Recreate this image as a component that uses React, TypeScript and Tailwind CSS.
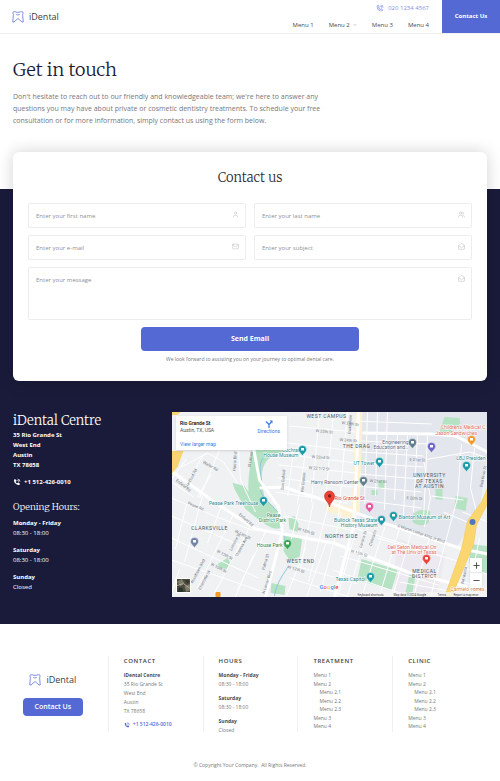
import { ReactNode } from 'react';
import clsx from 'clsx';
import {
  ChevronDown, Mail, MailOpen, Minus, Plus, User, Users,
} from 'lucide-react';
import { BiPhoneCall, BiSolidPhoneCall } from 'react-icons/bi';

const treatments = [
  { label: 'Menu 1' },
  { label: 'Menu 2' },
  { label: 'Menu 2.1', nested: true },
  { label: 'Menu 2.2', nested: true },
  { label: 'Menu 2.3', nested: true },
  { label: 'Menu 3' },
  { label: 'Menu 4' },
];

const hours = [
  { day: 'Monday - Friday', time: '08:30 - 18:00' },
  { day: 'Saturday', time: '08:30 - 18:00' },
  { day: 'Sunday', time: 'Closed' },
];

function Logo() {
  return (
    <a href="#home" className="flex items-center gap-[5px] text-[9px] leading-3 text-[#3c3d45]">
      <svg viewBox="0 0 24 24" className="h-3 w-3 text-[#5469d4]" fill="none" stroke="currentColor" strokeWidth="1.5" strokeLinejoin="round">
        <path d="M2 2.500C4 1 6 1 8 2c2.500 1 5.500 1 8 0 2-1 4-1 6 .5v3c-1 1-1 2.500-.6 4L22.500 22H20l-8-7-8 7H1.500l1.100-12.500c.4-1.500.4-3-.6-4z" />
        <path d="M8.500 7c2 1 5 1 7 0" />
      </svg>
      iDental
    </a>
  );
}

type FieldProps = { name: string, label: string, icon: ReactNode };

function Field({ name, label, icon }: FieldProps) {
  return (
    <div className="relative">
      <input
        name={name}
        aria-label={label}
        placeholder={label}
        className="block h-[25px] w-full rounded-xs border border-[#ededed] pr-5 pl-[7px] text-[6px] leading-3 text-gray-700 placeholder:text-[#8f8f8f]"
      />
      <span className="absolute top-2 right-[7px] text-[#c4c4c4]">{icon}</span>
    </div>
  );
}

const mapAreas = [
  'M80 34h22l-4 12c-6 5-8 13-8 22l3 18c5 6 12 10 15 17l1 13c-6 3-14-3-20-7l-15-12-11-20-2-6 12 3 4 6c-1-15 3-30 3-46z',
  'M91 38l16-5 4 7-13 3-5 8z',
  'M117 106l6-2 4 8-1 8-8-3z',
  'M113 122l18 3-3 20-10 3-6-9z',
  'M46 152l10-6 3 5-3 6-7-1z',
  'M100 171l14 3-1 9-14-2z',
  'M273 5l15 1 1 7-8 5-3 5-10-2z',
  'M264 77h7v11l-7-1z',
  'M241 104c3-7 15-7 18-4l-2 11c-6 4-14 2-16-2z',
  'M190 147l36 11-6 20-34-10z',
  'M207 68h6v9h-6zM200 78h6v5h-6z',
  'M284 84l12 2-2 13-11-3z',
  'M298 132l18 2v28l-10-3-8-9z',
  'M238 162l6 2-4 21h-7z',
];

const minorRoads = [
  // campus blocks
  'M196 0l-3 92M206 0l-2 84M216 0l-3 98M226 22l-3 66M236 22l-4 82M246 22l-4 78M256 24l-4 84',
  'M184 9l76 3M190 29l66 3M190 40l62 4M190 51l62 4M188 62l62 5M186 74l64 6M182 87l68 9M252 48l46-8 18 6',
  'M252 48l7 38-6 29M290 32l-4 54-12 44M303 36l-4 40 6 24M272 100l28 12M260 84l32 4',
  // west campus
  'M148 0l-8 90M162 0l-8 88M176 0l-9 104M118 14l66 6M109 30l74 9M112 42l72 9M107 53l77 8M107 66l74 9M104 80l72 11M122 38l-6 46M134 40l-8 52',
  'M112 104l72 15M128 92l-8 35M142 90l-13 66M157 92l-20 78M170 100l-21 80M134 136l-19 48M155 130l-20 55',
  'M124 154l62 18M118 166l60 19M184 120l-18 65M200 104l-24 80M215 110l-25 75M228 116l-20 68M240 120l-19 65M258 126l-16 59M274 130l-15 55',
  'M170 112l100 32M169 144l98 29M161 158l70 24M206 126l80 23M228 170l55 10',
  // clarksville
  'M0 86l43 18 40 15M0 104l70 30M0 126l34 16 53 24M0 148l92 32M15 93l-11 44M31 84l-18 66M62 102l-36 74M78 115l-35 66M94 120l-28 58M50 94l-14 37M8 157l-8 24M82 143l-18 42',
  'M0 70l22 15M15 47l-15 20M31 44l-17 31M10 55l26-14 16 9 14 21M48 38l-20 48M67 37l2 31 15 32M40 62l-14 23',
  'M291 100l25 10M284 154l32 8M293 137l-11 48M308 126l-12 59M286 168l30 9',
];

const mainRoads = [
  'M0 59l43 31 41 27 78 14 74 29 60 15',
  'M82 36l6 32 19 27 4 24-17 66',
  'M88 76l24-1 34 11 60 23 85 28 25 5',
  'M191 21l68 1 25 2 32 16',
  'M187 0l-2 56-3 58-19 71',
];

const streets = [
  { name: 'Enfield Rd', x: 4, y: 69, angle: 38 },
  { name: 'Enfield Rd', x: 67, y: 103, angle: 41 },
  { name: 'Waller Rd', x: 31, y: 51, angle: 30 },
  { name: 'Hartford Rd', x: 16, y: 76, angle: -62 },
  { name: 'Pease Rd', x: 16, y: 92, angle: 24 },
  { name: 'Harris Blvd', x: 64, y: 59, angle: -86 },
  { name: 'N Lamar', x: 79, y: 55, angle: -82 },
  { name: 'W 24th St', x: 170, y: 12, angle: 7 },
  { name: 'W 25th St', x: 144, y: 20, angle: 5 },
  { name: 'W 22nd St', x: 140, y: 46, angle: 4 },
  { name: 'W 22 1/2 St', x: 137, y: 57, angle: 4 },
  { name: 'W 24th St', x: 168, y: 29, angle: 4 },
  { name: 'W 18th St', x: 126, y: 118, angle: 17 },
  { name: 'W 15th St', x: 179, y: 140, angle: 17 },
  { name: 'W 12th St', x: 116, y: 156, angle: 17 },
  { name: 'W 12th St', x: 45, y: 140, angle: 28 },
  { name: 'W 13th St', x: 63, y: 120, angle: 26 },
  { name: 'W 10th St', x: 39, y: 153, angle: 28 },
  { name: 'Lorraine St', x: 60, y: 139, angle: -62 },
  { name: 'Theresa Ave', x: 66, y: 145, angle: -62 },
  { name: 'Woodlawn Blvd', x: 21, y: 172, angle: -62 },
  { name: 'Charlotte St', x: 29, y: 178, angle: -62 },
  { name: 'N Lamar Blvd', x: 93, y: 182, angle: -72 },
  { name: 'Palma St', x: 93, y: 158, angle: -74 },
  { name: 'Rio Grande', x: 132, y: 80, angle: -84 },
  { name: 'San Gabriel', x: 112, y: 78, angle: -85 },
  { name: 'Guadalupe', x: 179, y: 22, angle: -86 },
  { name: 'Lavaca St', x: 190, y: 136, angle: -72 },
  { name: 'Colorado', x: 200, y: 134, angle: -72 },
  { name: 'E 21st St', x: 238, y: 49, angle: 2 },
  { name: 'W 21st St', x: 198, y: 70, angle: 4 },
  { name: 'E 20th St', x: 235, y: 87, angle: 4 },
  { name: 'E Martin Luther King Jr Blvd', x: 226, y: 115, angle: 19 },
  { name: 'Red River St', x: 311, y: 75, angle: -79 },
  { name: 'Navasota', x: 292, y: 172, angle: -78 },
];

const districts = [
  { name: 'WEST CAMPUS', x: 155, y: 6 },
  { name: 'THE DRAG', x: 185, y: 36 },
  { name: 'UNIVERSITY', x: 258, y: 65 },
  { name: 'OF TEXAS', x: 258, y: 71 },
  { name: 'AT AUSTIN', x: 258, y: 76 },
  { name: 'CLARKSVILLE', x: 38, y: 118 },
  { name: 'NORTH SIDE', x: 170, y: 126 },
  { name: 'WEST END', x: 129, y: 151 },
  { name: 'MEDICAL', x: 253, y: 161 },
  { name: 'DISTRICT', x: 253, y: 166 },
];

const places = [
  { name: 'Cochran', x: 129, y: 40, color: '#2b8a91', anchor: 'end' },
  { name: 'House Museum', x: 127, y: 45, color: '#2b8a91', anchor: 'end' },
  { name: 'Pease Park Treehouse', x: 87, y: 93, color: '#2b8a91', anchor: 'end' },
  { name: 'Pease', x: 102, y: 105, color: '#2f8550', anchor: 'middle' },
  { name: 'District Park', x: 101, y: 110, color: '#2f8550', anchor: 'middle' },
  { name: 'House Park', x: 111, y: 135, color: '#2f8550', anchor: 'end' },
  { name: 'Harry Ransom Center', x: 187, y: 72, color: '#5f6b7a', anchor: 'end' },
  { name: 'Engineering', x: 237, y: 32, color: '#5f6b7a', anchor: 'end' },
  { name: 'Education and…', x: 237, y: 37, color: '#5f6b7a', anchor: 'end' },
  { name: 'UT Tower', x: 203, y: 53, color: '#2b8a91', anchor: 'end' },
  { name: "Children's Medical C", x: 314, y: 17, color: '#e06a5b', anchor: 'end' },
  { name: 'Jason Sandwiches', x: 264, y: 23, color: '#e06a5b', anchor: 'start' },
  { name: 'LBJ Presiden', x: 314, y: 48, color: '#2b8a91', anchor: 'end' },
  { name: 'Rio Grande St', x: 163, y: 88, color: '#dc4a42', anchor: 'start' },
  { name: 'Bullock Texas State', x: 206, y: 110, color: '#2b8a91', anchor: 'end' },
  { name: 'History Museum', x: 206, y: 115, color: '#2b8a91', anchor: 'end' },
  { name: 'Blanton Museum of Art', x: 227, y: 107, color: '#2b8a91', anchor: 'start' },
  { name: 'Dell Seton Medical Ctr', x: 265, y: 137, color: '#e06a5b', anchor: 'end' },
  { name: 'at The Univ of Texas', x: 265, y: 142, color: '#e06a5b', anchor: 'end' },
  { name: 'Texas Capitol', x: 194, y: 169, color: '#2b8a91', anchor: 'end' },
  { name: 'Carmelo Torres', x: 313, y: 179, color: '#e88a3c', anchor: 'end' },
] as const;

const pins = [
  { x: 131, y: 44, color: '#1c9aa8' },
  { x: 92, y: 95, color: '#1c9aa8' },
  { x: 208, y: 56, color: '#1c9aa8' },
  { x: 295, y: 60, color: '#1c9aa8' },
  { x: 210, y: 114, color: '#1c9aa8' },
  { x: 222, y: 110, color: '#1c9aa8' },
  { x: 199, y: 171, color: '#1c9aa8' },
  { x: 116, y: 138, color: '#34a853' },
  { x: 241, y: 37, color: '#607d8b' },
  { x: 192, y: 75, color: '#607d8b' },
  { x: 23, y: 136, color: '#7184a8' },
  { x: 260, y: 41, color: '#6c63c8' },
  { x: 300, y: 34, color: '#f29a28' },
  { x: 198, y: 101, color: '#e955a0' },
  { x: 255, y: 153, color: '#ea4335' },
];

function MapDrawing() {
  return (
    <svg viewBox="0 0 316 185" preserveAspectRatio="xMidYMid slice" className="h-full w-full" role="img" aria-label="Map of Austin around Rio Grande Street">
      <rect width="316" height="185" fill="#eff1f3" />
      <path d="M190 0h126v40l-8 58-22 36-98-27z" fill="#e3e6ec" />
      <path d="M224 126l50 16-9 43h-41z" fill="#eceaf0" />
      <path d="M184 0h7l-3 100h-8zM157 89l27 7-3 11-27-8z" fill="#fdf1d3" />
      {mapAreas.map((d) => <path key={d} d={d} fill="#b4e2c3" />)}
      <path d="M93 44c-10 12 1 24-4 35 8 17 23 18 22 36l3 20M117 154c-4 7-12 16-14 30" fill="none" stroke="#8cc7dc" />
      {minorRoads.map((d) => <path key={d} d={d} fill="none" stroke="#fff" />)}
      {mainRoads.map((d) => <path key={d} d={d} fill="none" stroke="#fff" strokeWidth="3" />)}
      <path d="M0 0h9l-3 3H0zM0 39h12L6 55l-6 7z" fill="#f9d371" />
      <path d="M310 90l6-14v16l-11 21-3 20-22 52h-7l17-48 6-28z" fill="#fbd66f" stroke="#f0c050" strokeWidth=".5" />
      <circle cx="301" cy="110" r="3" fill="#5475bd" />
      <g fontSize="4" fill="#757b84">
        {streets.map(({ name, x, y, angle }) => (
          <text key={`${name}-${x}-${y}`} transform={`translate(${x} ${y}) rotate(${angle})`}>{name}</text>
        ))}
      </g>
      <g fontSize="5" fill="#4d5560" textAnchor="middle" className="tracking-widest">
        {districts.map(({ name, x, y }) => <text key={name} x={x} y={y}>{name}</text>)}
      </g>
      <g fontSize="5" stroke="#fff" strokeWidth="1" paintOrder="stroke">
        {places.map(({
          name, x, y, color, anchor,
        }) => <text key={name} x={x} y={y} fill={color} textAnchor={anchor}>{name}</text>)}
      </g>
      {pins.map(({ x, y, color }) => (
        <g key={`${x}-${y}`} transform={`translate(${x} ${y})`}>
          <path d="M0 0C-1-3-4-3.500-4-6.500a4 4 0 0 1 8 0C4-3.500 1-3 0 0z" fill={color} stroke="#fff" strokeWidth=".4" />
          <path d="M-1.500-8h3v2.500h-3z" fill="#fff" />
        </g>
      ))}
      <path d="M158 95c-.5-5-5-6-5-11a5 5 0 0 1 10 0c0 5-4.500 6-5 11z" fill="#ea4335" stroke="#b3261e" strokeWidth=".5" />
      <circle cx="158" cy="84" r="1.700" fill="#8c1a13" />
      <rect x="44" y="180" width="5" height="5" rx="1" fill="#f29a28" />
      <text x="148" y="177" fontSize="6" fontWeight="500" stroke="#fff" strokeWidth="1" paintOrder="stroke">
        <tspan fill="#4285f4">G</tspan>
        <tspan fill="#ea4335">o</tspan>
        <tspan fill="#fbbc05">o</tspan>
        <tspan fill="#4285f4">g</tspan>
        <tspan fill="#34a853">l</tspan>
        <tspan fill="#ea4335">e</tspan>
      </text>
      <rect x="185" y="180" width="131" height="5" fill="#f5f5f5" opacity=".8" />
      <g fontSize="3" fill="#444">
        <text x="186" y="184">Keyboard shortcuts</text>
        <text x="222" y="184">Map data ©2024 Google</text>
        <text x="266" y="184">Terms</text>
        <text x="282" y="184">Report a map error</text>
      </g>
    </svg>
  );
}

function LocationMap() {
  return (
    <div className="relative h-[185px] min-w-0 flex-1 overflow-hidden bg-gray-100 font-['Roboto',sans-serif]">
      <MapDrawing />
      <div className="absolute top-1 left-1 flex h-[34px] w-[111px] justify-between bg-white px-1 pt-1 shadow-sm">
        <div className="flex flex-col text-[5px] leading-[7px] text-[#555]">
          <strong className="font-medium text-black">Rio Grande St</strong>
          <span>Austin, TX, USA</span>
          <a href="#map" className="mt-[7px] text-[#3b78e7]">View larger map</a>
        </div>
        <a href="#directions" className="flex flex-col items-center pr-[3px] text-[5px] leading-[7px] text-[#3b78e7]">
          <svg viewBox="0 0 16 16" className="h-2 w-2" fill="none" stroke="currentColor" strokeWidth="2.500">
            <path d="M8 16V9L2 3M8 9l5-5" />
            <path d="M9 1h6v6z" fill="currentColor" stroke="none" />
          </svg>
          Directions
        </a>
      </div>
      <button type="button" aria-label="Satellite view" className="absolute bottom-1 left-1 h-[15px] w-[15px] border border-white bg-[#4b4a3e]">
        <svg viewBox="0 0 14 14" className="h-full w-full">
          <path d="M0 3l5-3 3 4-4 4zM8 8l6-3v7l-4 2z" fill="#7c7b68" />
          <path d="M2 9l4 1 1 4H1zM9 1l4 1-2 3z" fill="#29332a" />
          <path d="M0 7l7-2 7 5" stroke="#b7ae98" fill="none" />
        </svg>
      </button>
      <div className="absolute right-[5px] bottom-[9px] flex w-3 flex-col divide-y divide-gray-200 bg-white text-[#555] shadow-sm">
        <button type="button" aria-label="Zoom in" className="flex h-[15px] items-center justify-center"><Plus size={9} strokeWidth={3} /></button>
        <button type="button" aria-label="Zoom out" className="flex h-[15px] items-center justify-center"><Minus size={9} strokeWidth={3} /></button>
      </div>
    </div>
  );
}

function Header() {
  return (
    <header className="flex h-[34px] border-b border-[#efefef]">
      <div className="flex flex-1 items-center justify-between pr-[13px] pl-3">
        <Logo />
        <div className="flex flex-col items-end gap-[9px] text-[6px] leading-2">
          <a href="tel:02012344567" className="flex items-center gap-1 text-[#7f90df]">
            <BiPhoneCall size={8} />
            020 1234 4567
          </a>
          <nav className="flex gap-[15px] text-[#4a4a4f]">
            <a href="#menu-1">Menu 1</a>
            <a href="#menu-2" className="flex items-center gap-[3px]">
              Menu 2
              <ChevronDown size={4} />
            </a>
            <a href="#menu-3">Menu 3</a>
            <a href="#menu-4">Menu 4</a>
          </nav>
        </div>
      </div>
      <a href="#contact" className="flex h-[33px] w-[58px] items-center justify-center bg-[#5469d4] text-[6px] font-bold text-white">Contact Us</a>
    </header>
  );
}

function ContactForm() {
  return (
    <form id="contact" className="-mt-[37px] rounded-md bg-white px-[15px] pt-[17px] pb-[18px] shadow-[0_0_16px_rgba(0,0,0,0.18)]">
      <h2 className="text-center font-['Merriweather','Liberation_Serif',serif] text-[13px] leading-[18px] font-light text-[#2d2d33]">Contact us</h2>
      <div className="mt-4 grid grid-cols-2 gap-x-2 gap-y-[7px]">
        <Field name="firstName" label="Enter your first name" icon={<User size={7} />} />
        <Field name="lastName" label="Enter your last name" icon={<Users size={7} />} />
        <Field name="email" label="Enter your e-mail" icon={<Mail size={7} />} />
        <Field name="subject" label="Enter your subject" icon={<MailOpen size={7} />} />
        <div className="relative col-span-2">
          <textarea
            name="message"
            aria-label="Enter your message"
            placeholder="Enter your message"
            className="block h-[53px] w-full resize-none rounded-xs border border-[#ededed] px-[7px] pt-[6px] text-[6px] leading-3 text-gray-700 placeholder:text-[#8f8f8f]"
          />
          <span className="absolute top-2 right-[7px] text-[#c4c4c4]"><MailOpen size={7} /></span>
        </div>
      </div>
      <div className="mt-[7px] flex flex-col items-center">
        <button type="submit" className="h-6 w-[218px] rounded bg-[#5469d4] text-[7px] font-bold text-white">Send Email</button>
        <p className="mt-1 text-[5px] leading-2 text-[#77777c]">We look forward to assisting you on your journey to optimal dental care.</p>
      </div>
    </form>
  );
}

function Location() {
  return (
    <div className="mt-[31px] flex">
      <div className="w-[159px] shrink-0 text-[6px] leading-[10px] text-white">
        <h2 className="font-['Merriweather','Liberation_Serif',serif] text-[13px] leading-[18px] font-light">iDental Centre</h2>
        <address className="font-bold not-italic">
          35 Rio Grande St
          <br />
          West End
          <br />
          Austin
          <br />
          TX 78658
          <a href="tel:+15124260010" className="mt-[7px] flex items-center gap-[3px]">
            <BiSolidPhoneCall size={8} />
            +1 512-426-0010
          </a>
        </address>
        <h3 className="mt-[14px] font-['Merriweather','Liberation_Serif',serif] text-[9px] leading-3 font-light">Opening Hours:</h3>
        <dl className="mt-[5px] flex flex-col gap-[7px]">
          {hours.map(({ day, time }) => (
            <div key={day}>
              <dt className="font-bold">{day}</dt>
              <dd>{time}</dd>
            </div>
          ))}
        </dl>
      </div>
      <LocationMap />
    </div>
  );
}

type FooterColumnProps = { title: string, children: ReactNode };

function FooterColumn({ title, children }: FooterColumnProps) {
  return (
    <section className="flex h-[76px] flex-col border-l border-[#f0f0f0] pl-[15px]">
      <h4 className="text-[6px] leading-[10px] font-semibold tracking-widest text-[#3c3d45]">{title}</h4>
      {children}
    </section>
  );
}

function FooterMenu() {
  return (
    <ul className="mt-[5px] flex flex-1 flex-col justify-between pb-[2px] leading-2">
      {treatments.map(({ label, nested }) => (
        <li key={label} className={clsx(nested && 'pl-[6px]')}><a href="#menu">{label}</a></li>
      ))}
    </ul>
  );
}

function Footer() {
  return (
    <footer className="px-[13px] pt-8 pb-3 text-[5px] text-[#77777c]">
      <div className="grid grid-cols-5">
        <div className="flex flex-col items-center justify-center gap-3 pt-[2px] pr-[15px]">
          <Logo />
          <a href="#contact" className="flex h-[18px] w-[60px] items-center justify-center rounded-sm bg-[#5469d4] text-[7px] font-semibold text-white">Contact Us</a>
        </div>
        <FooterColumn title="CONTACT">
          <address className="mt-[5px] flex flex-col leading-[9px] not-italic">
            <strong className="text-[#4a4a4f]">iDental Centre</strong>
            <span>35 Rio Grande St</span>
            <span>West End</span>
            <span>Austin</span>
            <span>TX 78658</span>
            <a href="tel:+15124260010" className="mt-1 flex items-center gap-[3px] font-semibold text-[#5469d4]">
              <BiSolidPhoneCall size={6} />
              +1 512-426-0010
            </a>
          </address>
        </FooterColumn>
        <FooterColumn title="HOURS">
          <dl className="mt-[5px] flex flex-col gap-[5px] leading-[9px]">
            {hours.map(({ day, time }) => (
              <div key={day}>
                <dt className="font-bold text-[#4a4a4f]">{day}</dt>
                <dd>{time}</dd>
              </div>
            ))}
          </dl>
        </FooterColumn>
        <FooterColumn title="TREATMENT"><FooterMenu /></FooterColumn>
        <FooterColumn title="CLINIC"><FooterMenu /></FooterColumn>
      </div>
      <p className="mt-[29px] text-center leading-2">© Copyright Your Company.&nbsp; All Rights Reserved.</p>
    </footer>
  );
}

export default function App() {
  return (
    <div className="bg-white font-['Open_Sans',sans-serif]">
      <Header />
      <main>
        <section className="px-[13px] pt-6 pb-[62px]">
          <h1 className="font-['Merriweather','Liberation_Serif',serif] text-[18px] leading-6 font-light text-[#1a1b35]">Get in touch</h1>
          <p className="mt-[9px] max-w-[316px] text-[7px] leading-3 text-[#77777c]">
            Don&apos;t hesitate to reach out to our friendly and knowledgeable team; we&apos;re here to answer any
            questions you may have about private or cosmetic dentistry treatments. To schedule your free
            consultation or for more information, simply contact us using the form below.
          </p>
        </section>
        <div className="flex flex-col bg-[#1a1b3a] px-[13px] pb-[27px]">
          <ContactForm />
          <Location />
        </div>
      </main>
      <Footer />
    </div>
  );
}
